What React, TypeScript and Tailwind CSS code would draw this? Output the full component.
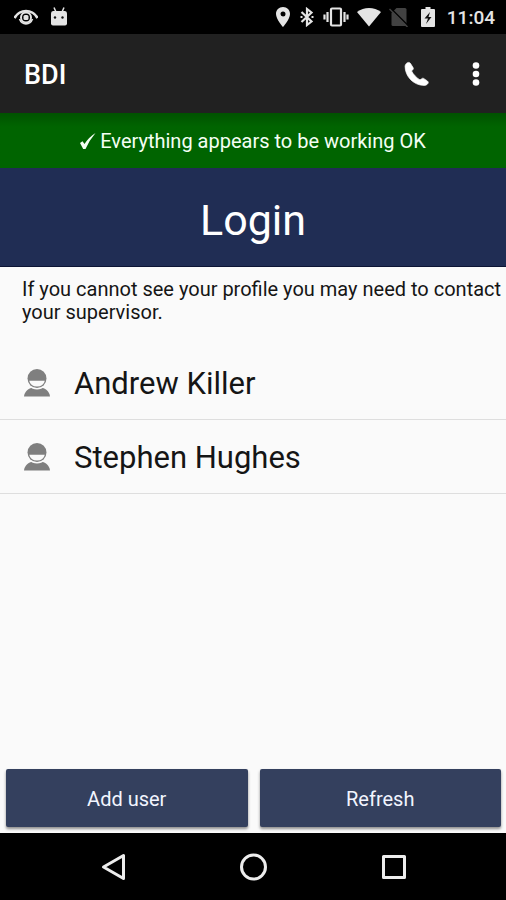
import React from "react";

const users = ["Andrew Killer", "Stephen Hughes"];

function StatusBar() {
  return (
    <div className="flex h-[34px] shrink-0 items-center justify-between bg-black pl-[14px] pr-[11px] text-[#e4e4e4]">
      <div className="flex items-center gap-3">
        <svg className="h-5 w-6" viewBox="0 0 24 20" fill="none" stroke="currentColor" aria-hidden="true">
          <path d="M.5 11C2.500 7.500 6 4 12 4S21.500 7.500 23.500 11" strokeWidth="2.600" />
          <path d="M5.500 12C8 18.500 16 18.500 18.500 12" strokeWidth="1.600" />
          <circle cx="12" cy="10.500" r="5" strokeWidth="2" />
          <rect x="9.500" y="8" width="5" height="5" rx="1.500" fill="currentColor" stroke="none" />
        </svg>
        <svg className="h-5 w-[18px]" viewBox="0 0 18 20" aria-hidden="true">
          <path d="M4 .5L6 5M14 .5L12 5" stroke="currentColor" strokeWidth="1.500" />
          <path d="M1 6.500Q1 4 3 4H15Q17 4 17 6.500V16.500Q17 18.500 15 18.500H3Q1 18.500 1 16.500Z" fill="currentColor" />
          <circle cx="5" cy="10.500" r="1.200" fill="#111" />
          <circle cx="12.500" cy="10.500" r="1.200" fill="#111" />
        </svg>
      </div>
      <div className="flex items-center gap-2">
        <svg className="h-5 w-4" viewBox="0 0 16 20" fill="currentColor" aria-hidden="true">
          <path fillRule="evenodd" d="M8 0C3.900 0 1 3 1 6.900C1 12 8 20 8 20S15 12 15 6.900C15 3 12.100 0 8 0ZM8 4.500A2.500 2.500 0 1 1 8 9.500A2.500 2.500 0 0 1 8 4.500Z" />
        </svg>
        <svg className="h-5 w-4" viewBox="0 0 16 20" fill="none" stroke="currentColor" strokeWidth="2.200" aria-hidden="true">
          <path d="M2.500 5L12.500 14.500L8 18V2L12.500 5.500L2.500 15" />
          <path d="M1.500 10h2M12.500 10h2" strokeWidth="2.200" />
        </svg>
        <svg className="h-5 w-[26px]" viewBox="0 0 26 20" fill="none" stroke="currentColor" strokeWidth="2.200" aria-hidden="true">
          <rect x="8" y="1.500" width="10" height="17" rx="1" />
          <path d="M4.500 5v10M21.500 5v10M1.500 7.500v5M24.500 7.500v5" />
        </svg>
        <svg className="h-5 w-6" viewBox="0 0 24 20" fill="currentColor" aria-hidden="true">
          <path d="M0 5C7 -.5 17 -.5 24 5L12 19.500Z" />
        </svg>
        <svg className="h-5 w-5" viewBox="0 0 20 20" aria-hidden="true">
          <path d="M7.500 1H16Q17.500 1 17.500 2.500V17.500Q17.500 19 16 19H4Q2.500 19 2.500 17.500V6Z" fill="#424242" />
          <path d="M1.500 1L19.500 19" stroke="black" strokeWidth="1.500" />
          <path d="M.5 2L18.500 20" stroke="#424242" strokeWidth="1.500" />
        </svg>
        <svg className="ml-1 h-5 w-[14px]" viewBox="0 0 14 20" aria-hidden="true">
          <path d="M4.500 0h5v2H13q1 0 1 1v16q0 1-1 1H1q-1 0-1-1V3q0-1 1-1h3.500Z" fill="currentColor" />
          <path d="M9 5L3.500 11.500H7L5 17L10.500 10H7.500Z" fill="#111" />
        </svg>
        <time className="ml-1 pt-[2px] text-[19px] leading-5 font-medium">11:04</time>
      </div>
    </div>
  );
}

function PersonIcon() {
  return (
    <svg className="h-7 w-[26px] shrink-0" viewBox="0 0 26 28" fill="#7f7f7f" aria-hidden="true">
      <path d="M0 27.500C.5 22 5 19.500 8.500 18.500H17.500C21 19.500 25.500 22 26 27.500Z" />
      <circle cx="13" cy="9.500" r="11" fill="#fafafa" />
      <circle cx="13" cy="9.500" r="9.500" />
      <path d="M5.200 11.700H20.800Q19.500 17.500 13 17.500T5.200 11.700Z" fill="#fafafa" />
    </svg>
  );
}

export default function App() {
  return (
    <div className="flex min-h-screen flex-col bg-[#fafafa] font-['Roboto','Noto_Sans',sans-serif] text-[#151515]">
      <StatusBar />
      <header className="flex h-[79px] shrink-0 items-center justify-between bg-[#212121] pl-6 pr-4 text-white">
        <span className="pt-[2px] text-[27px] leading-8 font-medium">BDI</span>
        <div className="flex items-center gap-[30px]">
          <button type="button" aria-label="Call" className="flex h-10 w-8 items-center justify-center">
            <svg className="h-8 w-8" viewBox="0 0 24 24" fill="currentColor" stroke="currentColor" strokeWidth="0.500" strokeLinejoin="round" aria-hidden="true">
              <path d="M6.500 3.300C5.200 3.300 3.800 4.700 3.800 6.200C3.800 13.800 10.200 20.600 18.200 20.600C19.700 20.600 21.200 19.400 21.200 18.400Q21.200 17.800 20.500 17.200L17.700 15.300Q17 14.900 16.400 15.500L15 16.400C12.800 15.200 9.800 12.200 8.700 9.700L9.900 8.400Q10.200 7.900 9.800 7.200L7.800 4Q7.300 3.300 6.500 3.300Z" />
            </svg>
          </button>
          <button type="button" aria-label="More options" className="flex h-10 w-7 items-center justify-center">
            <svg className="h-7 w-2" viewBox="0 0 8 28" fill="currentColor" aria-hidden="true">
              <circle cx="4" cy="5.500" r="3.300" />
              <circle cx="4" cy="14" r="3.300" />
              <circle cx="4" cy="22.500" r="3.300" />
            </svg>
          </button>
        </div>
      </header>
      <div role="status" className="flex h-[55px] shrink-0 items-center justify-center gap-1 bg-linear-to-b from-[#005200] to-[#006400] to-25% text-[20px] leading-6 text-[#f4fff4]">
        <svg className="h-5 w-4" viewBox="0 0 16 20" fill="currentColor" aria-hidden="true">
          <path d="M0 12L2.500 10.200L4.500 13Q9 6 15.500 2Q9.500 9 5.500 18H3.200Z" />
        </svg>
        <span>Everything appears to be working OK</span>
      </div>
      <h1 className="flex h-[99px] shrink-0 items-center justify-center border-b border-[#0c1434] bg-[#202d54] pt-[6px] text-[43px] leading-[52px] text-white">
        Login
      </h1>
      <main className="flex grow flex-col">
        <p className="pt-[11px] pb-[22px] pl-[22px] text-[20px] leading-[23px]">
          If you cannot see your profile you may need to contact your supervisor.
        </p>
        <ul>
          {users.map((user) => (
            <li key={user}>
              <button type="button" className="flex h-[74px] w-full items-center gap-6 border-b border-[#dedede] pl-6 text-left text-[31px] leading-9">
                <PersonIcon />
                <span className="pt-[2px]">{user}</span>
              </button>
            </li>
          ))}
        </ul>
        <div className="mt-auto flex gap-3 pr-[5px] pb-[6px] pl-[6px] text-[20px] leading-6 text-[#f2f5ff]">
          <button type="button" className="h-[58px] flex-1 rounded-xs bg-[#34405e] pt-[2px] shadow-[0_2px_3px_#00000070]">Add user</button>
          <button type="button" className="h-[58px] flex-1 rounded-xs bg-[#34405e] pt-[2px] shadow-[0_2px_3px_#00000070]">Refresh</button>
        </div>
      </main>
      <nav aria-label="System" className="z-10 flex h-[67px] shrink-0 items-center justify-center gap-[108px] bg-black text-[#ededed]">
        <button type="button" aria-label="Back" className="size-8">
          <svg viewBox="0 0 32 32" fill="none" stroke="currentColor" strokeWidth="3" strokeLinejoin="round" aria-hidden="true">
            <path d="M26.500 4.500V27.500L6.500 16Z" />
          </svg>
        </button>
        <button type="button" aria-label="Home" className="size-8">
          <svg viewBox="0 0 32 32" fill="none" stroke="currentColor" strokeWidth="3" aria-hidden="true">
            <circle cx="16.500" cy="16" r="12" />
          </svg>
        </button>
        <button type="button" aria-label="Recent apps" className="size-8">
          <svg viewBox="0 0 32 32" fill="none" stroke="currentColor" strokeWidth="3" strokeLinejoin="round" aria-hidden="true">
            <rect x="6.500" y="5.500" width="21" height="21" />
          </svg>
        </button>
      </nav>
    </div>
  );
}
